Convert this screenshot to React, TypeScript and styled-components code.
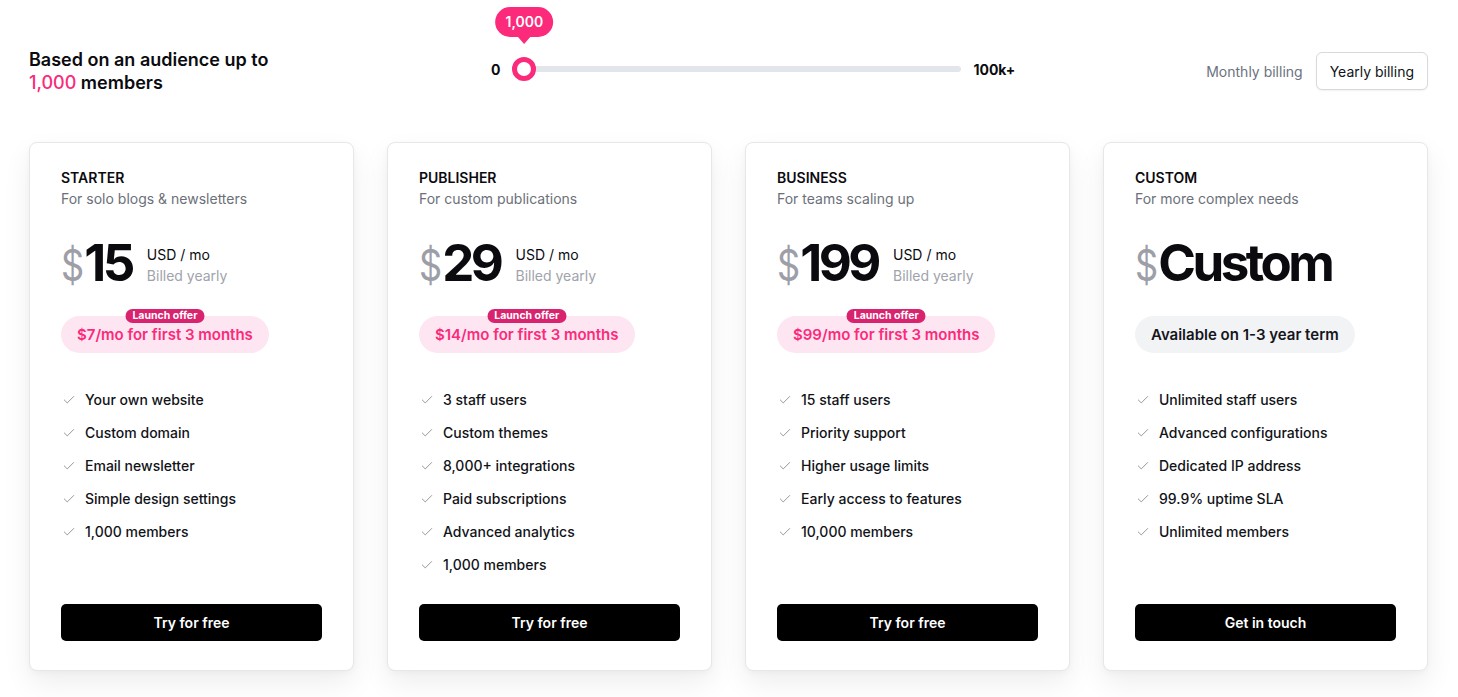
import styled, { createGlobalStyle } from "styled-components";
import { Check } from "lucide-react";

const GlobalStyle = createGlobalStyle`
  * { box-sizing: border-box; }
  body {
    margin: 0;
    background: #ffffff;
    font-family: Inter, "Noto Sans", "Liberation Sans", sans-serif;
    color: #0b0b0f;
    -webkit-font-smoothing: antialiased;
  }
`;

const PINK = "#fb2a7b";

const Page = styled.main`
  padding: 48px 30px 30px 29px;
  display: flex;
  flex-direction: column;
  gap: 48px;
`;

const TopBar = styled.header`
  display: flex;
  align-items: center;
  height: 46px;
`;

const Audience = styled.h2`
  width: 462px;
  margin: 0;
  font-size: 18px;
  font-weight: 600;
  line-height: 23px;
  color: #0b0b0f;
`;

const Highlight = styled.span`
  color: ${PINK};
  font-weight: 500;
`;

const SliderRow = styled.div`
  display: flex;
  align-items: center;
  gap: 12px;
  font-size: 14px;
  font-weight: 700;
  margin-top: -4px;
`;

const Track = styled.div`
  position: relative;
  width: 449px;
  height: 6px;
  border-radius: 3px;
  background: #e2e5e9;
`;

const Thumb = styled.div`
  position: absolute;
  top: 50%;
  width: 24px;
  height: 24px;
  border-radius: 50%;
  border: 5px solid ${PINK};
  background: #fff;
  transform: translate(-50%, -50%);
`;

const Bubble = styled.div`
  position: absolute;
  bottom: 39px;
  left: 50%;
  transform: translateX(-50%);
  height: 30px;
  padding: 0 10px;
  border-radius: 15px;
  background: ${PINK};
  color: #fff;
  font-size: 14px;
  font-weight: 600;
  line-height: 30px;
  white-space: nowrap;

  &::after {
    content: "";
    position: absolute;
    left: 50%;
    bottom: -7px;
    margin-left: -7px;
    border-left: 7px solid transparent;
    border-right: 7px solid transparent;
    border-top: 8px solid ${PINK};
  }
`;

const Billing = styled.div`
  margin-left: auto;
  display: flex;
  align-items: center;
  gap: 13px;
`;

const BillingOption = styled.button<{ $active?: boolean }>`
  font-family: inherit;
  font-size: 14px;
  font-weight: 400;
  height: 38px;
  padding: 0 ${(p) => (p.$active ? "13px" : "0")};
  border-radius: 6px;
  cursor: pointer;
  color: ${(p) => (p.$active ? "#111318" : "#6b7280")};
  background: #fff;
  border: ${(p) => (p.$active ? "1px solid #d7d9df" : "none")};
  box-shadow: ${(p) => (p.$active ? "0 1px 2px rgba(0,0,0,0.06)" : "none")};
`;

const Plans = styled.section`
  display: grid;
  grid-template-columns: repeat(4, 325px);
  gap: 33px;
`;

const Card = styled.article`
  height: 529px;
  display: flex;
  flex-direction: column;
  padding: 25px 31px 29px;
  border: 1px solid #e6e7ea;
  border-radius: 8px;
  background: #fff;
  box-shadow: 0 12px 28px rgba(0, 0, 0, 0.07), 0 2px 6px rgba(0, 0, 0, 0.03);
`;

const PlanName = styled.h3`
  margin: 0;
  font-size: 14px;
  font-weight: 600;
  line-height: 20px;
  text-transform: uppercase;
  color: #0b0b0f;
`;

const PlanDesc = styled.p`
  margin: 1px 0 0;
  font-size: 14px;
  line-height: 20px;
  color: #6b7079;
`;

const PriceRow = styled.div`
  margin-top: 29px;
  height: 52px;
  display: flex;
  align-items: center;
  gap: 15px;
`;

const Amount = styled.div`
  font-size: 51px;
  line-height: 52px;
  font-weight: 700;
  letter-spacing: -3.5px;
  color: #0b0b0f;
`;

const Dollar = styled.span`
  display: inline-block;
  font-weight: 400;
  font-size: 44px;
  color: #9d9ea8;
  letter-spacing: 0;
  transform: scaleX(0.82);
  transform-origin: left center;
  margin-right: -5px;
`;

const PriceMeta = styled.div`
  font-size: 14px;
  line-height: 21px;
  color: #0b0b0f;
  margin-top: 1px;
`;

const Muted = styled.div`
  color: #a0a3ab;
`;

const Pill = styled.div<{ $tone: "pink" | "gray" }>`
  position: relative;
  align-self: flex-start;
  margin-top: 26px;
  height: 37px;
  padding: 0 16px;
  border-radius: 19px;
  display: flex;
  align-items: center;
  font-size: 15px;
  font-weight: 600;
  background: ${(p) => (p.$tone === "pink" ? "#fde6f1" : "#f2f3f5")};
  color: ${(p) => (p.$tone === "pink" ? PINK : "#15161b")};
`;

const OfferTag = styled.span`
  position: absolute;
  top: -7px;
  left: 50%;
  transform: translateX(-50%);
  height: 14px;
  padding: 0 7px;
  border-radius: 7px;
  background: #d8236f;
  color: #fff;
  font-size: 10.5px;
  font-weight: 700;
  line-height: 14px;
  white-space: nowrap;
`;

const Features = styled.ul`
  list-style: none;
  margin: 30px 0 0;
  padding: 0;
`;

const Feature = styled.li`
  height: 33px;
  display: flex;
  align-items: center;
  gap: 9px;
  padding-left: 1px;
  font-size: 14px;
  font-weight: 500;
  color: #111318;

  svg {
    color: #8d9099;
    flex-shrink: 0;
  }
`;

const Action = styled.button`
  margin-top: auto;
  height: 37px;
  width: 100%;
  border: none;
  border-radius: 5px;
  background: #000;
  color: #fff;
  font-family: inherit;
  font-size: 14px;
  font-weight: 600;
  cursor: pointer;
`;

type Plan = {
  name: string;
  desc: string;
  price: string;
  offer?: string;
  note?: string;
  features: string[];
  cta: string;
};

const plans: Plan[] = [
  {
    name: "Starter",
    desc: "For solo blogs & newsletters",
    price: "15",
    offer: "$7/mo for first 3 months",
    features: ["Your own website", "Custom domain", "Email newsletter", "Simple design settings", "1,000 members"],
    cta: "Try for free",
  },
  {
    name: "Publisher",
    desc: "For custom publications",
    price: "29",
    offer: "$14/mo for first 3 months",
    features: ["3 staff users", "Custom themes", "8,000+ integrations", "Paid subscriptions", "Advanced analytics", "1,000 members"],
    cta: "Try for free",
  },
  {
    name: "Business",
    desc: "For teams scaling up",
    price: "199",
    offer: "$99/mo for first 3 months",
    features: ["15 staff users", "Priority support", "Higher usage limits", "Early access to features", "10,000 members"],
    cta: "Try for free",
  },
  {
    name: "Custom",
    desc: "For more complex needs",
    price: "Custom",
    note: "Available on 1-3 year term",
    features: ["Unlimited staff users", "Advanced configurations", "Dedicated IP address", "99.9% uptime SLA", "Unlimited members"],
    cta: "Get in touch",
  },
];

const members = 1000;
const maxMembers = 100000;
const trackWidth = 449;

const App = () => {
  const thumbLeft = Math.max(12, (members / maxMembers) * trackWidth);

  return (
    <>
      <GlobalStyle />
      <Page>
        <TopBar>
          <Audience>
            Based on an audience up to
            <br />
            <Highlight>1,000</Highlight> members
          </Audience>

          <SliderRow>
            <span>0</span>
            <Track>
              <Thumb style={{ left: thumbLeft }}>
                <Bubble>1,000</Bubble>
              </Thumb>
            </Track>
            <span>100k+</span>
          </SliderRow>

          <Billing>
            <BillingOption>Monthly billing</BillingOption>
            <BillingOption $active>Yearly billing</BillingOption>
          </Billing>
        </TopBar>

        <Plans>
          {plans.map((plan) => (
            <Card key={plan.name}>
              <PlanName>{plan.name}</PlanName>
              <PlanDesc>{plan.desc}</PlanDesc>

              <PriceRow>
                <Amount>
                  <Dollar>$</Dollar>
                  {plan.price}
                </Amount>
                {plan.offer && (
                  <PriceMeta>
                    USD / mo
                    <Muted>Billed yearly</Muted>
                  </PriceMeta>
                )}
              </PriceRow>

              {plan.offer ? (
                <Pill $tone="pink">
                  <OfferTag>Launch offer</OfferTag>
                  {plan.offer}
                </Pill>
              ) : (
                <Pill $tone="gray">{plan.note}</Pill>
              )}

              <Features>
                {plan.features.map((f) => (
                  <Feature key={f}>
                    <Check size={14} strokeWidth={1.6} />
                    {f}
                  </Feature>
                ))}
              </Features>

              <Action>{plan.cta}</Action>
            </Card>
          ))}
        </Plans>
      </Page>
    </>
  );
};

export default App;
